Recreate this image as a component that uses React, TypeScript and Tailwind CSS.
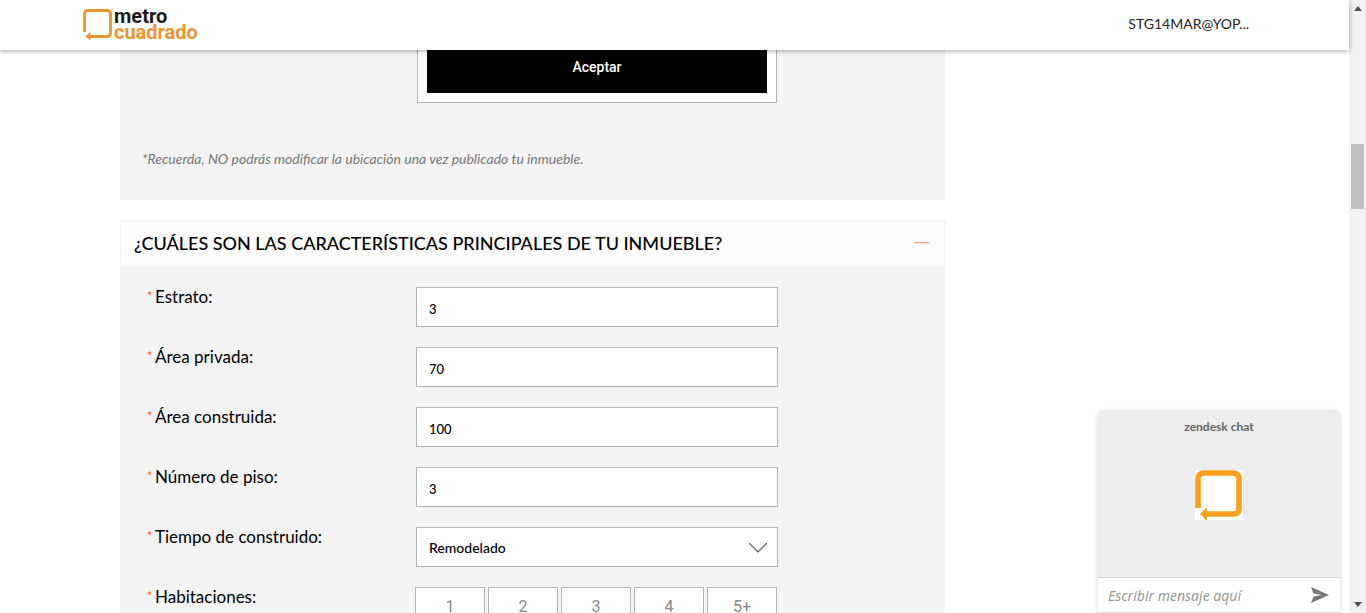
import React from "react";

const fields = [
  { id: "estrato", label: "Estrato:", value: "3" },
  { id: "area-privada", label: "Área privada:", value: "70" },
  { id: "area-construida", label: "Área construida:", value: "100" },
  { id: "piso", label: "Número de piso:", value: "3" },
];

const rooms = ["1", "2", "3", "4", "5+"];

function FrameMark({ className, color }: { className: string; color: string }) {
  return (
    <svg viewBox="0 0 48 50" className={className} fill="none" aria-hidden="true">
      <path d="M3 38V9Q3 3 9 3H38Q44 3 44 9V38Q44 44 38 44H10" stroke={color} strokeWidth="5.6" />
      <path d="M5 44L11 38H12V50H11Z" fill={color} />
    </svg>
  );
}

function Required() {
  return <span className="w-2 text-[13px] leading-[18px] text-[#ff5a1f]">*</span>;
}

function Header() {
  return (
    <header className="z-10 flex h-[50px] shrink-0 items-center justify-between bg-white pr-[100px] pb-0.5 pl-[83px] shadow-[0_1px_5px_rgba(0,0,0,0.35)]">
      <a href="#inicio" className="flex items-end gap-0.5" aria-label="metrocuadrado">
        <svg viewBox="0 0 29 31" className="h-[31px] w-[29px]" fill="none" aria-hidden="true">
          <path d="M1.5 23V5Q1.5 1.5 5 1.5H24Q27.500 1.500 27.500 5V24Q27.500 27.500 24 27.500H5" stroke="#ec9530" strokeWidth="2.800" />
          <path d="M2.500 27.500L6.500 24H7.500V31H6.500Z" fill="#ec9530" />
        </svg>
        <span className="flex flex-col font-[Roboto,sans-serif] text-[20px] leading-4 font-bold">
          <span className="text-[#1a1a1a]">metro</span>
          <span className="text-[#ec9530]">cuadrado</span>
        </span>
      </a>
      <a href="#cuenta" className="font-[Lato,sans-serif] text-[14px] leading-5 text-[#222]">
        STG14MAR@YOP...
      </a>
    </header>
  );
}

function Chat() {
  return (
    <section
      aria-label="Chat"
      className="absolute right-[9px] bottom-0 z-20 flex h-[202px] w-[242px] flex-col rounded-t-md border-b border-[#d5d5d5] bg-[#ededed] shadow-[0_0_4px_rgba(0,0,0,0.2)]"
    >
      <h2 className="pt-1.5 text-center font-[Lato,sans-serif] text-[12px] leading-5 font-bold text-[#666]">
        zendesk chat
      </h2>
      <div className="flex flex-1 items-start justify-center pt-[33px]">
        <div className="mr-px h-[50px] w-12 bg-white">
          <FrameMark className="h-[50px] w-12" color="#fa9f1e" />
        </div>
      </div>
      <form className="flex h-[35px] items-center justify-between border-t border-[#d5d5d5] bg-white pr-[11px] pl-2.5">
        <input
          aria-label="Mensaje"
          placeholder="Escribir mensaje aquí"
          className="w-40 font-['Noto_Sans','Open_Sans',sans-serif] text-[14px] italic outline-none placeholder:text-[#999]"
        />
        <button type="button" aria-label="Enviar">
          <svg viewBox="0 0 18 18" className="size-[18px]" aria-hidden="true">
            <path d="M0 1L18 9L0 17L2.500 10.500L11 9L2.500 7.500Z" fill="#777" />
          </svg>
        </button>
      </form>
    </section>
  );
}

function Scrollbar() {
  return (
    <div aria-hidden="true" className="flex w-[17px] shrink-0 flex-col items-center justify-between bg-[#f1f1f1] py-1.5">
      <svg viewBox="0 0 8 5" className="h-[5px] w-2">
        <path d="M0 5L4 0L8 5Z" fill="#505050" />
      </svg>
      <div className="flex w-[13px] flex-1 flex-col pt-[133px]">
        <div className="h-[65px] bg-[#c1c1c1]" />
      </div>
      <svg viewBox="0 0 8 5" className="h-[5px] w-2">
        <path d="M0 0L4 5L8 0Z" fill="#505050" />
      </svg>
    </div>
  );
}

export default function App() {
  return (
    <div className="flex h-screen overflow-hidden bg-white font-[Lato,sans-serif] text-black">
      <div className="relative flex min-w-0 flex-1 flex-col">
        <Header />
        <main className="flex min-h-0 flex-1 flex-col gap-5 overflow-hidden pl-[120px]">
          <section className="flex w-full max-w-[825px] shrink-0 flex-col bg-[#f3f3f3] pb-[31px]">
            <div className="ml-[297px] w-[360px] border border-t-0 border-[#b5b5b5] bg-white px-[9px] pb-[9px]">
              <button type="button" className="h-[43px] w-full bg-black pb-2 font-[Roboto,sans-serif] text-[14px] font-medium text-white">
                Aceptar
              </button>
            </div>
            <p className="mt-[46px] pl-[22px] text-[14px] leading-5 text-[#777] italic">
              *Recuerda, NO podrás modificar la ubicación una vez publicado tu inmueble.
            </p>
          </section>

          <section className="flex w-full max-w-[825px] shrink-0 flex-col bg-[#f3f3f3]">
            <div className="flex h-[46px] items-center justify-between border border-b-0 border-[#f3f3f3] bg-[#fcfcfc] pr-[15px] pb-0.5 pl-[13px]">
              <h1 className="text-[18px] leading-6 font-medium">
                ¿CUÁLES SON LAS CARACTERÍSTICAS PRINCIPALES DE TU INMUEBLE?
              </h1>
              <button type="button" aria-label="Contraer" className="flex h-6 w-[15px] items-center">
                <span className="h-0.5 w-full border-b border-[#ffe3da] bg-[#ff9d7d]" />
              </button>
            </div>
            <form className="flex flex-col gap-5 pt-[21px] pl-[27px]">
              {fields.map((f) => (
                <div key={f.id} className="flex h-10 items-start">
                  <label htmlFor={f.id} className="flex w-[269px] text-[17px] leading-5">
                    <Required />
                    {f.label}
                  </label>
                  <input
                    id={f.id}
                    defaultValue={f.value}
                    className="h-10 w-[362px] border border-[#b5b5b5] bg-white px-3 pt-1 text-[13px] font-medium"
                  />
                </div>
              ))}
              <div className="flex h-10 items-start">
                <label htmlFor="tiempo" className="flex w-[269px] text-[17px] leading-5">
                  <Required />
                  Tiempo de construido:
                </label>
                <div className="relative">
                  <select
                    id="tiempo"
                    className="h-10 w-[362px] appearance-none border border-[#b5b5b5] bg-white px-3 text-[14px] font-medium"
                  >
                    <option>Remodelado</option>
                  </select>
                  <svg viewBox="0 0 18 10" className="pointer-events-none absolute top-4 right-[11px] h-2.5 w-[18px]" fill="none" aria-hidden="true">
                    <path d="M0 0L9 9L18 0" stroke="#555" strokeWidth="1.200" />
                  </svg>
                </div>
              </div>
              <fieldset className="flex h-10 items-start">
                <legend className="float-left flex w-[268px] text-[17px] leading-5">
                  <Required />
                  Habitaciones:
                </legend>
                <div className="flex gap-[3px]">
                  {rooms.map((r) => (
                    <button
                      key={r}
                      type="button"
                      className="h-10 w-[70px] border border-[#b5b5b5] bg-white font-['Liberation_Sans_Narrow','Roboto',sans-serif] text-[16px] text-[#888]"
                    >
                      {r}
                    </button>
                  ))}
                </div>
              </fieldset>
            </form>
          </section>
        </main>
        <Chat />
      </div>
      <Scrollbar />
    </div>
  );
}
